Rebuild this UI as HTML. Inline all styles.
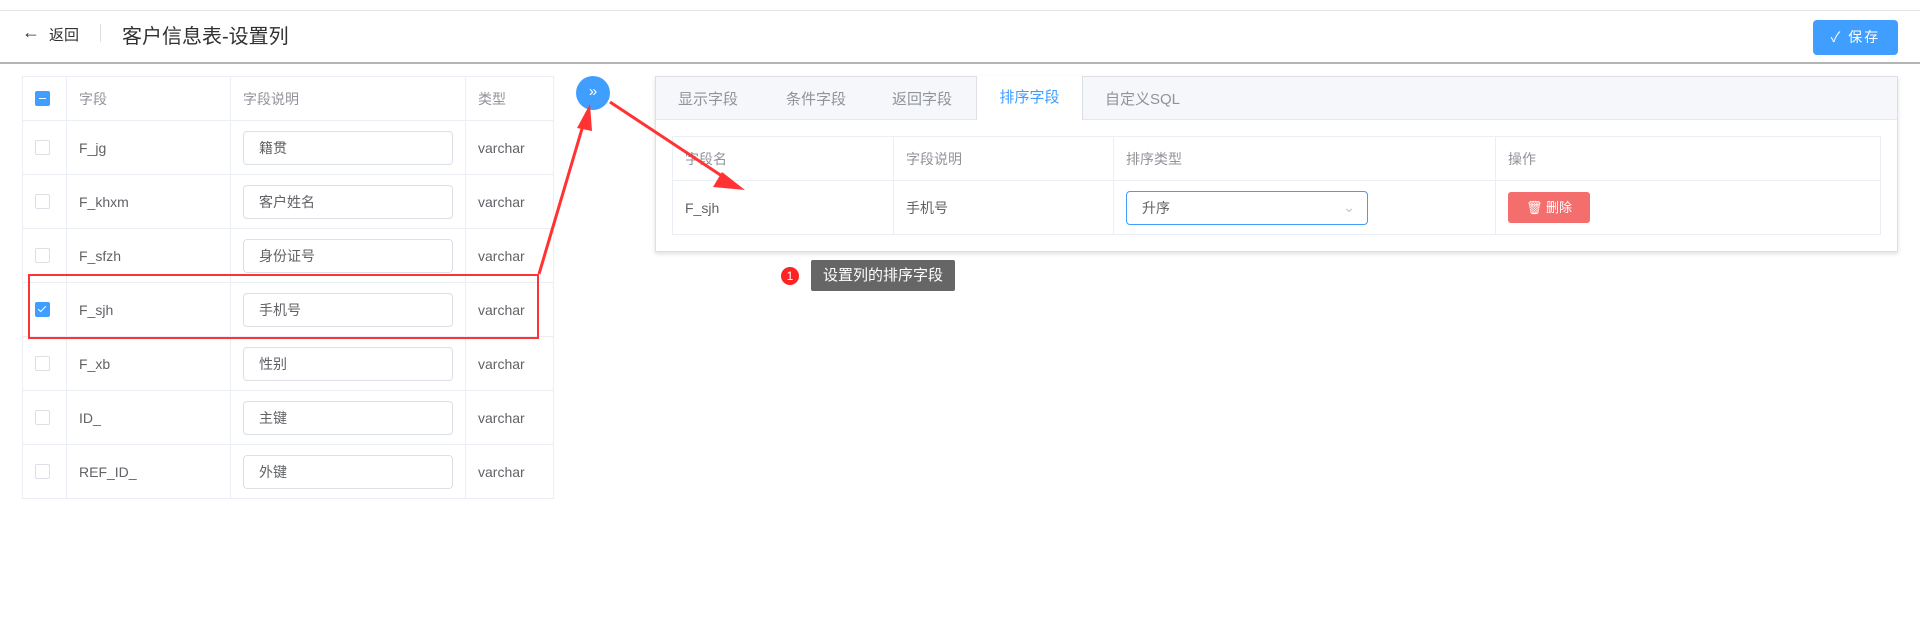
<!DOCTYPE html>
<html><head><meta charset="utf-8"><style>
*{box-sizing:border-box;margin:0;padding:0}
body{width:1920px;height:617px;background:#fff;position:relative;overflow:hidden;font-family:"Liberation Sans","Noto Sans CJK SC",sans-serif;color:#606266;font-size:14px}
.abs{position:absolute}
table{border-collapse:collapse;position:absolute;table-layout:fixed}
td{border:1px solid #ebeef5;padding:0 12px;vertical-align:middle}
.hd td{color:#909399}
.inp{border:1px solid #dcdfe6;border-radius:4px;height:34px;line-height:32px;padding-left:15px;color:#606266}
.cb{width:15px;height:15px;border:1px solid #dcdfe6;border-radius:2px;background:#fff;position:relative}
.cb.on{background:#409eff;border-color:#409eff}
</style></head><body>
<div class="abs" style="left:0;top:10px;width:1920px;height:1px;background:#e4e4e4"></div>
<div class="abs" style="left:22px;top:22px;font-size:18px;color:#303133">&#8592;</div>
<div class="abs" style="left:49px;top:24px;font-size:15px;color:#303133">返回</div>
<div class="abs" style="left:100px;top:24px;width:1px;height:18px;background:#dcdfe6"></div>
<div class="abs" style="left:122px;top:20px;font-size:20px;color:#303133">客户信息表-设置列</div>
<div class="abs" style="left:1813px;top:20px;width:85px;height:35px;background:#409eff;border-radius:4px;color:#fff;font-size:14px;line-height:35px;text-align:center;letter-spacing:2px">✓ 保存</div>
<div class="abs" style="left:0;top:62px;width:1920px;height:2px;background:#b5b5b5"></div>

<table style="left:22px;top:76px;width:531px">
<colgroup><col style="width:44px"><col style="width:164px"><col style="width:235px"><col style="width:88px"></colgroup>
<tr class="hd" style="height:44px"><td><div class="cb on"><div style="position:absolute;left:3px;top:6px;width:7px;height:1px;background:#fff"></div></div></td><td>字段</td><td>字段说明</td><td>类型</td></tr>
<tr style="height:54px"><td><div class="cb"></div></td><td>F_jg</td><td><div class="inp">籍贯</div></td><td>varchar</td></tr>
<tr style="height:54px"><td><div class="cb"></div></td><td>F_khxm</td><td><div class="inp">客户姓名</div></td><td>varchar</td></tr>
<tr style="height:54px"><td><div class="cb"></div></td><td>F_sfzh</td><td><div class="inp">身份证号</div></td><td>varchar</td></tr>
<tr style="height:54px"><td><div class="cb on"><div style="position:absolute;left:4px;top:1px;width:4px;height:8px;border:solid #fff;border-width:0 1px 1px 0;transform:rotate(45deg)"></div></div></td><td>F_sjh</td><td><div class="inp">手机号</div></td><td>varchar</td></tr>
<tr style="height:54px"><td><div class="cb"></div></td><td>F_xb</td><td><div class="inp">性别</div></td><td>varchar</td></tr>
<tr style="height:54px"><td><div class="cb"></div></td><td>ID_</td><td><div class="inp">主键</div></td><td>varchar</td></tr>
<tr style="height:54px"><td><div class="cb"></div></td><td>REF_ID_</td><td><div class="inp">外键</div></td><td>varchar</td></tr>
</table>

<div class="abs" style="left:28px;top:274px;width:511px;height:65px;border:2px solid #f33"></div>

<div class="abs" style="left:576px;top:76px;width:34px;height:34px;border-radius:50%;background:#409eff;color:#fff;text-align:center;line-height:32px;font-size:15px">»</div>

<div class="abs" style="left:655px;top:76px;width:1243px;height:176px;border:1px solid #dcdfe6;box-shadow:0 2px 4px rgba(0,0,0,.12);background:#fff">
 <div style="height:43px;background:#f5f7fa;border-bottom:1px solid #e4e7ed;position:relative;font-size:15px;color:#909399">
  <span class="abs" style="left:22px;top:11px">显示字段</span>
  <span class="abs" style="left:130px;top:11px">条件字段</span>
  <span class="abs" style="left:236px;top:11px">返回字段</span>
  <div class="abs" style="left:320px;top:-1px;width:107px;height:44px;background:#fff;border-left:1px solid #dcdfe6;border-right:1px solid #dcdfe6;color:#409eff;text-align:center;padding-top:12px;line-height:20px">排序字段</div>
  <span class="abs" style="left:449px;top:11px">自定义SQL</span>
 </div>
</div>
<table style="left:672px;top:136px;width:1208px">
<colgroup><col style="width:221px"><col style="width:220px"><col style="width:382px"><col style="width:385px"></colgroup>
<tr class="hd" style="height:44px"><td>字段名</td><td>字段说明</td><td>排序类型</td><td>操作</td></tr>
<tr style="height:54px"><td>F_sjh</td><td>手机号</td><td><div class="inp" style="border-color:#409eff;width:242px;position:relative">升序<span style="position:absolute;right:12px;top:-1px;color:#c0c4cc">&#8964;</span></div></td><td><div style="width:82px;height:31px;background:#f46e6e;border-radius:3px;color:#fff;text-align:center;line-height:31px;font-size:13px">🗑 删除</div></td></tr>
</table>

<div class="abs" style="left:781px;top:267px;width:18px;height:18px;border-radius:50%;background:#f22;color:#fff;font-size:12px;text-align:center;line-height:18px">1</div>
<div class="abs" style="left:805px;top:271px;width:0;height:0;border:6px solid transparent;border-right-color:#666"></div>
<div class="abs" style="left:811px;top:260px;width:144px;height:31px;background:#666;border-radius:2px;color:#fff;font-size:15px;line-height:31px;text-align:center">设置列的排序字段</div>

<svg class="abs" style="left:0;top:0" width="1920" height="617">
<line x1="539" y1="274" x2="584" y2="122" stroke="#f33" stroke-width="3"/>
<polygon points="590,104 577,128 592,131" fill="#f33"/>
<line x1="610" y1="102" x2="728" y2="180" stroke="#f33" stroke-width="3"/>
<polygon points="745,190 722,172 713,187" fill="#f33"/>
</svg>
</body></html>
